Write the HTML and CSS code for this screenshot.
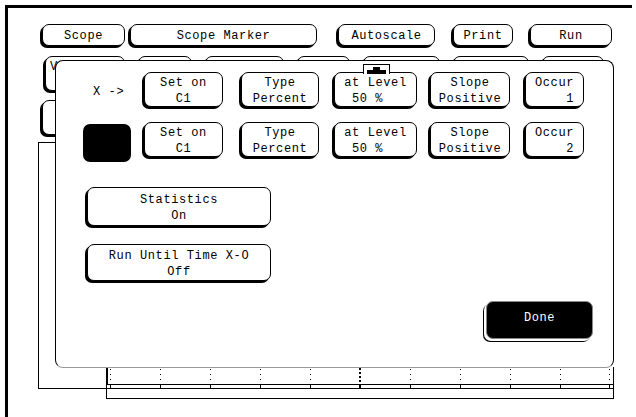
FILE: index.html
```html
<!DOCTYPE html>
<html>
<head>
<meta charset="utf-8">
<link rel="stylesheet" href="styles.css">
</head>
<body>
<div class="screen">
  <div class="toprow">
    <div class="btn b-scope">Scope</div>
    <div class="btn b-marker">Scope Marker</div>
    <div class="btn b-auto">Autoscale</div>
    <div class="btn b-print">Print</div>
    <div class="btn b-run">Run</div>
  </div>
  <div class="tabrow">
    <div class="btn tab t1"><span class="tab-label">Vertical</span></div>
    <div class="btn tab t2"></div>
    <div class="btn tab t3"></div>
    <div class="btn tab t4"></div>
    <div class="btn tab t5"></div>
    <div class="btn tab t6"></div>
    <div class="btn tab t7"></div>
  </div>
  <div class="btn row3"></div>
  <div class="lower">
    <div class="leftbox"></div>
    <svg class="wave" width="508" height="32" viewBox="0 0 508 32">
      <g stroke="#000" fill="none" shape-rendering="crispEdges">
        <path d="M1 0V17" stroke-width="2"/>
        <path d="M0.5 17V32"/>
        <path d="M0 17.5H508M0 21.5H508M0 31.5H508M507.5 0V32"/>
        <path stroke-dasharray="1 4" d="M4.5 2V17M54.5 2V17M104.5 2V17M154.5 2V17M204.5 2V17M304.5 2V17M354.5 2V17M404.5 2V17M454.5 2V17M503.5 2V17"/>
        <path stroke-width="2" stroke-dasharray="2 2" d="M254 1V17"/>
        <path d="M4.5 17V21M54.5 17V21M104.5 17V21M154.5 17V21M204.5 17V21M304.5 17V21M354.5 17V21M404.5 17V21M454.5 17V21M503.5 17V21"/>
        <path stroke-width="2" d="M254 17V22"/>
      </g>
    </svg>
  </div>
</div>

<div class="dialog">
  <div class="grid">
    <div class="xlabel">X -&gt;</div>
    <div class="btn c-set">Set on<br>C1</div>
    <div class="btn c-type">Type<br>Percent</div>
    <div class="btn c-level">
      <svg class="marker" width="27" height="10" viewBox="0 0 27 10">
        <path d="M0.5 10V0.5H26.5V10" fill="#fff" stroke="#000" shape-rendering="crispEdges"/>
        <rect x="10" y="3" width="7" height="3" fill="#000"/>
        <rect x="4" y="6" width="19" height="4" fill="#000"/>
      </svg>
      <span>at Level</span><span class="lvl">50 %</span>
    </div>
    <div class="btn c-slope">Slope<br>Positive</div>
    <div class="btn c-occur">Occur<br>    1</div>

    <div class="blackbox"></div>
    <div class="btn c-set">Set on<br>C1</div>
    <div class="btn c-type">Type<br>Percent</div>
    <div class="btn c-level"><span>at Level</span><span class="lvl">50 %</span></div>
    <div class="btn c-slope">Slope<br>Positive</div>
    <div class="btn c-occur">Occur<br>    2</div>
  </div>
  <div class="btn stats">Statistics<br>On</div>
  <div class="btn rununtil">Run Until Time X-O<br>Off</div>
  <div class="btn done">Done</div>
</div>
</body>
</html>
```

FILE: styles.css
```css
* { box-sizing: border-box; }

body {
  margin: 0;
  width: 636px;
  height: 417px;
  overflow: hidden;
  position: relative;
  background: #fff;
  color: #000;
  font-family: "Liberation Mono", "DejaVu Sans Mono", monospace;
  font-size: 12px;
}

.screen {
  margin: 5px 0 0 5px;
  width: 627px;
  height: 412px;
  border-top: 3px solid #000;
  border-left: 3px solid #000;
}

.btn {
  display: flex;
  flex-direction: column;
  align-items: center;
  justify-content: center;
  background: #fff;
  border: 1px solid #000;
  border-radius: 7px;
  box-shadow: -2px 2px 0 #000;
  line-height: 16px;
  letter-spacing: 0.6px;
  white-space: pre;
  text-align: center;
  padding-top: 2px;
}

/* top row */
.toprow {
  display: flex;
  height: 22px;
  margin: 16px 0 0 34px;
}
.b-scope { width: 83px; }
.b-marker { width: 187px; margin-left: 5px; }
.b-auto { width: 97px; margin-left: 21px; }
.b-print { width: 60px; margin-left: 18px; }
.b-run { width: 82px; margin-left: 17px; }

/* tab row behind dialog */
.tabrow {
  display: flex;
  gap: 13px;
  height: 35px;
  margin: 10px 0 0 37px;
}
.tab { align-items: flex-start; justify-content: flex-start; padding: 2px 0 0 4px; }
.t1 { width: 80px; }
.t2 { width: 54px; }
.t3 { width: 79px; }
.t4 { width: 53px; }
.t5 { width: 77px; }
.t6 { width: 76px; }
.t7 { width: 62px; }

.row3 {
  width: 80px;
  height: 35px;
  margin: 9px 0 0 34px;
}

.lower {
  display: flex;
  margin: 7px 0 0 30px;
}
.leftbox {
  width: 68px;
  height: 247px;
  border: 1px solid #000;
  border-right: none;
}
.wave {
  display: block;
  margin-top: 225px;
}

/* dialog overlay */
.dialog {
  position: absolute;
  left: 55px;
  top: 60px;
  width: 559px;
  height: 308px;
  background: #fff;
  border: 1px solid #000;
  border-bottom-color: #999;
  border-radius: 8px;
  padding: 11px 0 0 27px;
}

.grid {
  display: grid;
  grid-template-columns: 61px 97px 93px 96px 95px 59px;
  grid-template-rows: 35px 35px;
  row-gap: 15px;
}
.xlabel {
  align-self: center;
  padding: 4px 0 0 10px;
  letter-spacing: 0.6px;
  white-space: pre;
}
.blackbox {
  width: 48px;
  height: 38px;
  margin-top: 2px;
  background: #000;
  border-radius: 7px;
}
.c-set { width: 79px; }
.c-type { width: 78px; }
.c-level { width: 83px; position: relative; }
.c-slope { width: 80px; }
.c-occur { width: 59px; }
.lvl { padding-right: 16px; }
.marker {
  position: absolute;
  left: 28px;
  top: -9px;
}

.stats {
  width: 184px;
  height: 39px;
  margin: 30px 0 0 4px;
}
.rununtil {
  width: 184px;
  height: 37px;
  margin: 18px 0 0 4px;
}
.done {
  width: 107px;
  height: 38px;
  margin: 20px 0 0 403px;
  padding: 0 0 4px;
  background: #000;
  color: #fff;
  border-color: #888;
  box-shadow: -2px 2px 0 #fff, -3px 3px 0 #000;
}
```
